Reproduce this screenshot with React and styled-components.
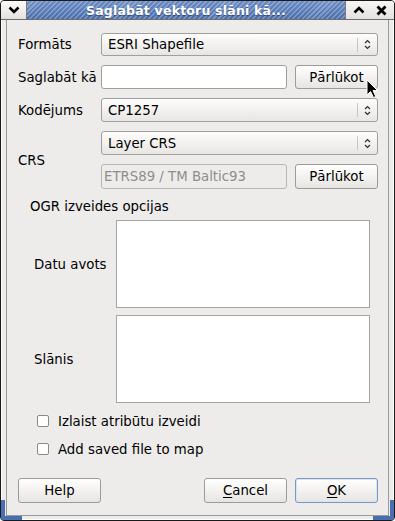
import React from 'react';
import styled, { createGlobalStyle } from 'styled-components';

const GlobalStyle = createGlobalStyle`
  html, body {
    margin: 0;
    padding: 0;
    background: #ffffff;
  }
  body {
    font-family: "DejaVu Sans", "Liberation Sans", sans-serif;
    font-size: 13.3px;
    color: #000000;
  }
`;

function ChevronDown() {
  return (
    <svg width="12" height="8" viewBox="0 0 12 8">
      <polyline points="1.5,1.5 6,6 10.5,1.5" fill="none" stroke="#000" strokeWidth="2.6" />
    </svg>
  );
}

function ChevronUp() {
  return (
    <svg width="12" height="8" viewBox="0 0 12 8">
      <polyline points="1.5,6.5 6,2 10.5,6.5" fill="none" stroke="#000" strokeWidth="2.6" />
    </svg>
  );
}

function CloseIcon() {
  return (
    <svg width="11" height="11" viewBox="0 0 11 11">
      <path d="M1.5 1.5 L9.5 9.5 M9.5 1.5 L1.5 9.5" stroke="#000" strokeWidth="2.8" />
    </svg>
  );
}

function UpDown() {
  return (
    <svg width="7" height="11" viewBox="0 0 7 11">
      <polyline points="1,4 3.5,1.5 6,4" fill="none" stroke="#2e2e2e" strokeWidth="1.2" />
      <polyline points="1,7 3.5,9.5 6,7" fill="none" stroke="#2e2e2e" strokeWidth="1.2" />
    </svg>
  );
}

function Cursor() {
  return (
    <svg width="13" height="20" viewBox="0 0 13 20">
      <path d="M1 1 L1 16 L4.5 12.5 L7.5 18.5 L9.8 17.5 L7 11.5 L11.5 11.5 Z"
        fill="#000" stroke="#fff" strokeWidth="1" strokeLinejoin="round" />
    </svg>
  );
}

function Combo({ value }) {
  return (
    <ComboBox>
      <ComboText>{value}</ComboText>
      <ComboArrow><UpDown /></ComboArrow>
    </ComboBox>
  );
}

function Check({ label }) {
  return (
    <CheckRow>
      <CheckBox />
      <span>{label}</span>
    </CheckRow>
  );
}

export default function App() {
  return (
    <>
      <GlobalStyle />
      <Window>
        <TitleBar>
          <MenuButton><ChevronDown /></MenuButton>
          <TitleArea>Saglabāt vektoru slāni kā...</TitleArea>
          <TitleButtons>
            <TitleButton><ChevronUp /></TitleButton>
            <TitleButton><CloseIcon /></TitleButton>
          </TitleButtons>
        </TitleBar>
        <Content>
          <Form>
            <Label>Formāts</Label>
            <Combo value="ESRI Shapefile" />
            <Label>Saglabāt kā</Label>
            <FieldRow>
              <TextInput />
              <Button>Pārlūkot</Button>
            </FieldRow>
            <Label>Kodējums</Label>
            <Combo value="CP1257" />
            <Label $span>CRS</Label>
            <Combo value="Layer CRS" />
            <FieldRow>
              <TextInput $disabled>ETRS89 / TM Baltic93</TextInput>
              <Button>Pārlūkot</Button>
            </FieldRow>
          </Form>

          <GroupTitle>OGR izveides opcijas</GroupTitle>
          <Group>
            <Label>Datu avots</Label>
            <TextArea />
            <Label>Slānis</Label>
            <TextArea />
          </Group>

          <Checks>
            <Check label="Izlaist atribūtu izveidi" />
            <Check label="Add saved file to map" />
          </Checks>

          <ButtonBar>
            <Button>Help</Button>
            <Spacer />
            <Button><u>C</u>ancel</Button>
            <Button $default><u>O</u>K</Button>
          </ButtonBar>
        </Content>
        <Grip $side="left" />
        <Grip $side="right" />
        <PointerLayer><Cursor /></PointerLayer>
      </Window>
    </>
  );
}

const Window = styled.div`
  position: relative;
  width: 395px;
  height: 521px;
  box-sizing: border-box;
  border: 1px solid #1a1a1a;
  border-radius: 4px;
  background: #edeceb;
  box-shadow: inset 1px 1px 0 #ffffff, inset -1px -1px 0 #ffffff;
  display: flex;
  flex-direction: column;
  padding: 0 0 4px 0;
  overflow: hidden;
`;

const TitleBar = styled.div`
  display: flex;
  height: 18px;
  border-bottom: 1px solid #6e6e6e;
  flex-shrink: 0;
`;

const MenuButton = styled.div`
  width: 25px;
  display: flex;
  align-items: center;
  justify-content: center;
  background: linear-gradient(#fbfbfa, #e3e1de);
  border-right: 1px solid #7a7a7a;
  border-top-left-radius: 3px;
`;

const TitleArea = styled.div`
  flex: 1;
  display: flex;
  align-items: center;
  justify-content: center;
  color: #ffffff;
  font-weight: bold;
  font-size: 12.5px;
  letter-spacing: 0.2px;
  text-shadow: 0 1px 1px rgba(20, 40, 80, 0.6);
  background:
    repeating-linear-gradient(135deg, rgba(255, 255, 255, 0.26) 0 1.5px, transparent 1.5px 3.5px),
    linear-gradient(#6a8cc6, #4b6eab);
`;

const TitleButtons = styled.div`
  width: 44px;
  display: flex;
  align-items: center;
  justify-content: space-around;
  background: linear-gradient(#f7f6f5, #e4e2df);
  border-left: 1px solid #7a7a7a;
  padding: 0 2px;
`;

const TitleButton = styled.div`
  display: flex;
  align-items: center;
  justify-content: center;
  width: 18px;
`;

const Content = styled.div`
  flex: 1;
  margin: 0 5px;
  border-left: 1px solid #9a9a98;
  border-right: 1px solid #9a9a98;
  border-bottom: 1px solid #9a9a98;
  display: flex;
  flex-direction: column;
  padding: 13px 10px 0 11px;
`;

const Form = styled.div`
  display: grid;
  grid-template-columns: 83px 1fr;
  grid-template-rows: 23px 24px 24px 24px 25px;
  row-gap: 9px;
`;

const Label = styled.div`
  display: flex;
  align-items: center;
  white-space: nowrap;
  grid-row: ${({ $span }) => ($span ? 'span 2' : 'auto')};
`;

const ComboBox = styled.div`
  display: flex;
  align-items: center;
  border: 1px solid #a19f9c;
  border-radius: 3px;
  background: linear-gradient(#fdfdfd, #e8e6e3);
  box-sizing: border-box;
`;

const ComboText = styled.div`
  flex: 1;
  padding-left: 6px;
`;

const ComboArrow = styled.div`
  width: 19px;
  height: 14px;
  display: flex;
  align-items: center;
  justify-content: center;
  border-left: 1px solid #c9c7c4;
`;

const FieldRow = styled.div`
  display: flex;
  gap: 8px;
`;

const TextInput = styled.div`
  flex: 1;
  box-sizing: border-box;
  border: 1px solid ${({ $disabled }) => ($disabled ? '#b9b7b4' : '#a19f9c')};
  border-radius: 3px;
  background: ${({ $disabled }) => ($disabled ? '#edeceb' : '#ffffff')};
  color: #8e8d8b;
  display: flex;
  align-items: center;
  padding-left: 2px;
`;

const Button = styled.div`
  width: 83px;
  box-sizing: border-box;
  border: 1px solid ${({ $default }) => ($default ? '#7c97c4' : '#9d9b98')};
  border-radius: 3px;
  background: linear-gradient(#ffffff, #e7e5e2);
  box-shadow: ${({ $default }) => ($default ? 'inset 0 0 0 1px #dbe4f2' : 'none')};
  display: flex;
  align-items: center;
  justify-content: center;
  height: 100%;
  u {
    text-underline-offset: 2px;
  }
`;

const GroupTitle = styled.div`
  margin-top: 10px;
  padding-left: 12px;
  line-height: 16px;
`;

const Group = styled.div`
  display: grid;
  grid-template-columns: 82px 1fr;
  grid-template-rows: 88px 88px;
  row-gap: 7px;
  margin-top: 5px;
  padding: 0 8px 0 16px;
`;

const TextArea = styled.div`
  background: #ffffff;
  border: 1px solid #a5a4a2;
`;

const Checks = styled.div`
  display: flex;
  flex-direction: column;
  gap: 8px;
  margin-top: 8px;
  padding-left: 19px;
`;

const CheckRow = styled.div`
  display: flex;
  align-items: center;
  gap: 9px;
  height: 20px;
`;

const CheckBox = styled.div`
  width: 12px;
  height: 12px;
  box-sizing: border-box;
  border: 1px solid #8a8987;
  border-radius: 2px;
  background: #ffffff;
`;

const ButtonBar = styled.div`
  display: flex;
  gap: 8px;
  height: 25px;
  margin-top: 19px;
`;

const Spacer = styled.div`
  flex: 1;
`;

const Grip = styled.div`
  position: absolute;
  bottom: 0;
  ${({ $side }) => $side}: 0;
  width: 21px;
  height: 20px;
  border-bottom: 4px solid #4a6fb0;
  ${({ $side }) => `border-${$side}: 4px solid #4a6fb0;`}
  box-sizing: border-box;
  pointer-events: none;
`;

const PointerLayer = styled.div`
  position: absolute;
  left: 365px;
  top: 78px;
  line-height: 0;
`;
